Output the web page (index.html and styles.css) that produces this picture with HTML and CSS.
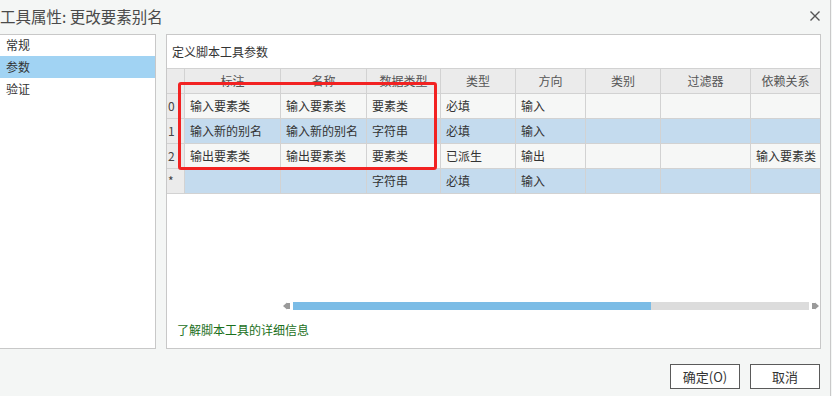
FILE: index.html
```html
<!DOCTYPE html>
<html lang="zh-CN">
<head>
<meta charset="utf-8">
<title>工具属性: 更改要素别名</title>
<link rel="stylesheet" href="styles.css">
</head>
<body>
<div class="window">
  <header class="titlebar">
    <div class="title">工具属性: 更改要素别名</div>
    <button class="close" aria-label="关闭">
      <svg width="10" height="10" viewBox="0 0 10 10"><path d="M0.5 0.5 L9.5 9.5 M9.5 0.5 L0.5 9.5" stroke="#555" stroke-width="1.4" fill="none"/></svg>
    </button>
  </header>
  <main class="main">
    <nav class="sidebar">
      <div class="nav-item">常规</div>
      <div class="nav-item active">参数</div>
      <div class="nav-item">验证</div>
    </nav>
    <section class="panel">
      <div class="panel-title">定义脚本工具参数</div>
      <div class="grid">
        <div class="h rn"></div><div class="h">标注</div><div class="h">名称</div><div class="h">数据类型</div><div class="h">类型</div><div class="h">方向</div><div class="h">类别</div><div class="h">过滤器</div><div class="h last">依赖关系</div>

        <div class="rn">0</div><div class="c">输入要素类</div><div class="c">输入要素类</div><div class="c">要素类</div><div class="c">必填</div><div class="c">输入</div><div class="c"></div><div class="c"></div><div class="c last"></div>

        <div class="rn">1</div><div class="c sel">输入新的别名</div><div class="c sel">输入新的别名</div><div class="c sel">字符串</div><div class="c sel">必填</div><div class="c sel">输入</div><div class="c sel"></div><div class="c sel"></div><div class="c sel last"></div>

        <div class="rn">2</div><div class="c">输出要素类</div><div class="c">输出要素类</div><div class="c">要素类</div><div class="c">已派生</div><div class="c">输出</div><div class="c"></div><div class="c"></div><div class="c last">输入要素类</div>

        <div class="rn">*</div><div class="c sel"></div><div class="c sel"></div><div class="c sel">字符串</div><div class="c sel">必填</div><div class="c sel">输入</div><div class="c sel"></div><div class="c sel"></div><div class="c sel last"></div>

        <div class="highlight-box"></div>
      </div>
      <div class="hscroll">
        <svg class="arrow" width="7" height="8" viewBox="0 0 7 8"><path d="M0 4 L4 0.5 L4 7.5 Z M4 1 H7 V7 H4 Z" fill="#9a9a9a"/></svg>
        <div class="track"><div class="thumb"></div></div>
        <svg class="arrow" width="7" height="8" viewBox="0 0 7 8"><path d="M7 4 L3 0.5 L3 7.5 Z M0 1 H3 V7 H0 Z" fill="#9a9a9a"/></svg>
      </div>
      <a class="link" href="#">了解脚本工具的详细信息</a>
    </section>
  </main>
  <footer class="footer">
    <button class="btn">确定(O)</button>
    <button class="btn">取消</button>
  </footer>
</div>
</body>
</html>
```
FILE: styles.css
```css
* { box-sizing: border-box; }
html, body {
  margin: 0;
  padding: 0;
  background: #f4f6f5;
  width: 832px;
  height: 396px;
  overflow: hidden;
  font-family: "Noto Sans CJK SC", "Microsoft YaHei", sans-serif;
  color: #333;
}
.window {
  width: 831px;
  height: 396px;
  border-right: 1px solid #c9c9c9;
  display: flex;
  flex-direction: column;
}
.titlebar {
  height: 34px;
  display: flex;
  align-items: center;
  justify-content: space-between;
  padding: 0 10px 2px 0;
}
.title {
  font-size: 15.5px;
  color: #4a4a4a;
  line-height: 20px;
}
.close {
  border: none;
  background: none;
  padding: 0;
  width: 10px;
  height: 10px;
  display: flex;
}
.main {
  height: 315px;
  display: flex;
  gap: 10px;
}
.sidebar {
  width: 156px;
  background: #fff;
  border: 1px solid #c8c8c8;
  border-left: none;
}
.nav-item {
  height: 22px;
  line-height: 22px;
  padding-left: 6px;
  font-size: 12px;
  color: #333;
}
.nav-item:first-child { height: 21px; line-height: 20px; }
.nav-item.active { background: #a1d3f3; }
.panel {
  width: 655px;
  background: #fff;
  border: 1px solid #c8c8c8;
  display: flex;
  flex-direction: column;
}
.panel-title {
  height: 33px;
  line-height: 33px;
  padding-left: 5px;
  font-size: 12px;
  color: #333;
}
.grid {
  position: relative;
  display: grid;
  grid-template-columns: 18px 96px 86px 74px 75px 70px 75px 90px 69px;
  grid-auto-rows: 25px;
  border-top: 1px solid #d2d2d2;
  font-size: 12px;
}
.grid > div:not(.highlight-box) {
  border-right: 1px solid #d2d2d2;
  border-bottom: 1px solid #d2d2d2;
  line-height: 23px;
  white-space: nowrap;
  overflow: hidden;
}
.grid .h {
  background: #ebebeb;
  color: #555;
  text-align: center;
}
.grid .rn {
  background: #ebebeb;
  color: #444;
  padding-left: 1px;
}
.grid .c {
  background: #f6f7f6;
  padding-left: 5px;
  color: #333;
}
.grid .c.sel { background: #c4dbee; }
.grid .last { border-right: none !important; }
.highlight-box {
  position: absolute;
  left: 11px;
  top: 13px;
  width: 259px;
  height: 88px;
  border: 3px solid #f22222;
  border-radius: 3px;
  pointer-events: none;
}
.hscroll {
  margin-top: 108px;
  margin-left: 116px;
  height: 8px;
  display: flex;
  align-items: center;
  gap: 3px;
}
.arrow { display: block; }
.track {
  width: 516px;
  height: 8px;
  background: #dcdcdc;
}
.thumb {
  width: 358px;
  height: 8px;
  background: #7bbce6;
}
.link {
  margin: 12px 0 0 10px;
  font-size: 12px;
  line-height: 16px;
  color: #1b6f1b;
  text-decoration: none;
}
.footer {
  display: flex;
  justify-content: flex-end;
  gap: 10px;
  padding: 15px 10px 0 0;
}
.btn {
  width: 70px;
  height: 25px;
  background: #fff;
  border: 1px solid #5a5a5a;
  font-family: "Noto Sans CJK SC", "Microsoft YaHei", sans-serif;
  font-size: 13px;
  color: #333;
  padding: 0;
}
```
